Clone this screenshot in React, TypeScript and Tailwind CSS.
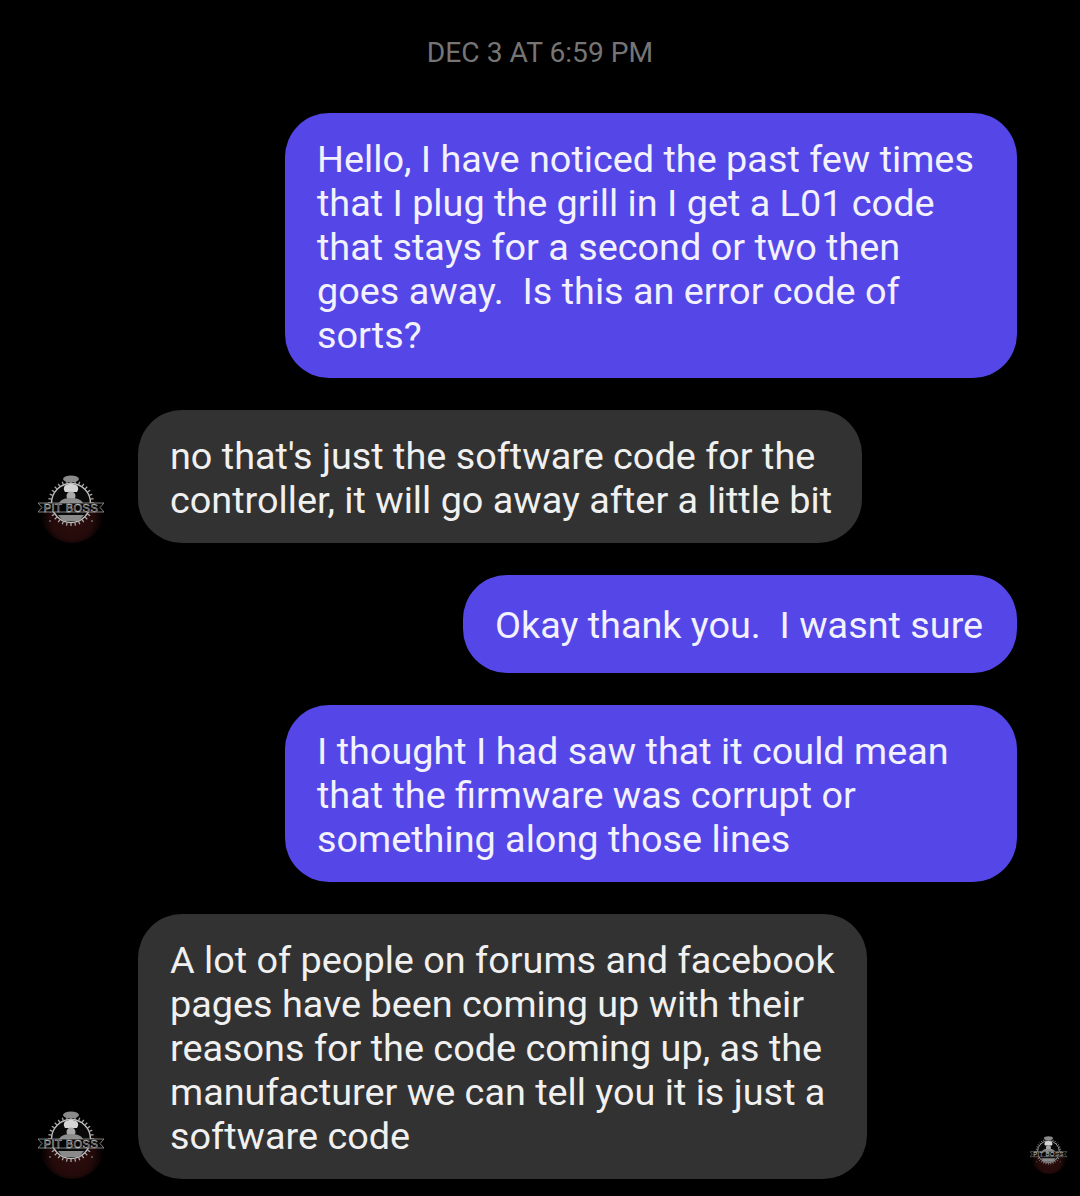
import React from "react";

// Pit Boss badge, drawn small so the detail mostly blurs together like the photo
function PitBossLogo({ size, id }: { size: number; id: string }) {
  const teeth = Array.from({ length: 32 }, (_, i) => (i * 360) / 32);
  return (
    <svg width={size} height={size} viewBox="0 0 68 68" className="shrink-0">
      <defs>
        <radialGradient id={id} cx="50%" cy="62%" r="50%">
          <stop offset="0%" stopColor="#2e0e0d" />
          <stop offset="65%" stopColor="#240a0a" />
          <stop offset="100%" stopColor="#000000" />
        </radialGradient>
      </defs>
      <circle cx="34" cy="36" r="32" fill={`url(#${id})`} />
      {/* gear ring */}
      <g stroke="#a8a8a8" strokeWidth="1.3">
        {teeth.map((a) => (
          <line key={a} x1="33" y1="5" x2="33" y2="8" transform={`rotate(${a} 33 28)`} />
        ))}
      </g>
      <circle cx="33" cy="28" r="19.5" fill="#090909" stroke="#bdbdbd" strokeWidth="1.4" />
      {/* chef hat and head */}
      <ellipse cx="33" cy="4" rx="8" ry="3.5" fill="#8a8a8a" />
      <path d="M26 15c-1-4 2-6 7-6s8 2 7 6l-1 2H27z" fill="#d4d4d4" />
      <circle cx="33" cy="21" r="4.5" fill="#a9a9a9" />
      <path d="M21 28c2-4 7-5 12-5s10 1 12 5z" fill="#8c8c8c" />
      {/* banner */}
      <path d="M0 28h66l-4 4.500 4 4.500H0l4-4.500z" fill="#050505" stroke="#9c9c9c" strokeWidth="0.8" />
      <text
        x="33"
        y="36.500"
        textAnchor="middle"
        fontFamily="Liberation Sans, sans-serif"
        fontSize="11"
        fill="#000"
        stroke="#d8d8d8"
        strokeWidth="0.45"
        letterSpacing="0.5"
      >
        PIT BOSS
      </text>
      <path d="M20 40h26l-5 6H25z" fill="#8a8a8a" />
      <circle cx="12" cy="46" r="1" fill="#6a6a6a" />
      <circle cx="54" cy="46" r="1" fill="#6a6a6a" />
    </svg>
  );
}

function Bubble({ lines, sent, pad = "py-[22.5px]" }: { lines: string[]; sent?: boolean; pad?: string }) {
  return (
    <div
      className={`rounded-[44px] pl-[32px] ${pad} text-[37.8px] leading-[44px] whitespace-pre ${
        sent ? "bg-[#5546e8] text-[#f2f1fd]" : "bg-[#323232] text-[#f0f0f0]"
      }`}
    >
      {lines.map((l) => (
        <div key={l} className="translate-y-[1px]">
          {l}
        </div>
      ))}
    </div>
  );
}

export default function App() {
  return (
    <div className="h-[1196px] w-[1080px] overflow-hidden bg-black font-['Roboto',sans-serif] antialiased">
      <div className="flex h-[113px] items-start justify-center pt-[36px] text-[28.2px] leading-[34px] text-[#757575]">
        DEC 3 AT 6:59 PM
      </div>

      <div className="flex flex-col gap-[32px]">
        <div className="flex justify-end pr-[63px]">
          <div className="w-[732px]">
            <Bubble
              sent
              lines={[
                "Hello, I have noticed the past few times",
                "that I plug the grill in I get a L01 code",
                "that stays for a second or two then",
                "goes away.  Is this an error code of",
                "sorts?",
              ]}
            />
          </div>
        </div>

        <div className="flex items-end gap-[32px] pl-[38px]">
          <PitBossLogo size={68} id="ember-a" />
          <div className="w-[724px]">
            <Bubble
              lines={["no that's just the software code for the", "controller, it will go away after a little bit"]}
            />
          </div>
        </div>

        <div className="flex justify-end pr-[63px]">
          <div className="w-[554px]">
            <Bubble sent pad="py-[27px]" lines={["Okay thank you.  I wasnt sure"]} />
          </div>
        </div>

        <div className="flex justify-end pr-[63px]">
          <div className="w-[732px]">
            <Bubble
              sent
              lines={[
                "I thought I had saw that it could mean",
                "that the firmware was corrupt or",
                "something along those lines",
              ]}
            />
          </div>
        </div>

        <div className="flex items-end justify-between pl-[38px] pr-[12px]">
          <div className="flex items-end gap-[32px]">
            <PitBossLogo size={68} id="ember-b" />
            <div className="w-[729px]">
              <Bubble
                lines={[
                  "A lot of people on forums and facebook",
                  "pages have been coming up with their",
                  "reasons for the code coming up, as the",
                  "manufacturer we can tell you it is just a",
                  "software code",
                ]}
              />
            </div>
          </div>
          <div className="mb-[5px]">
            <PitBossLogo size={38} id="ember-c" />
          </div>
        </div>
      </div>
    </div>
  );
}
